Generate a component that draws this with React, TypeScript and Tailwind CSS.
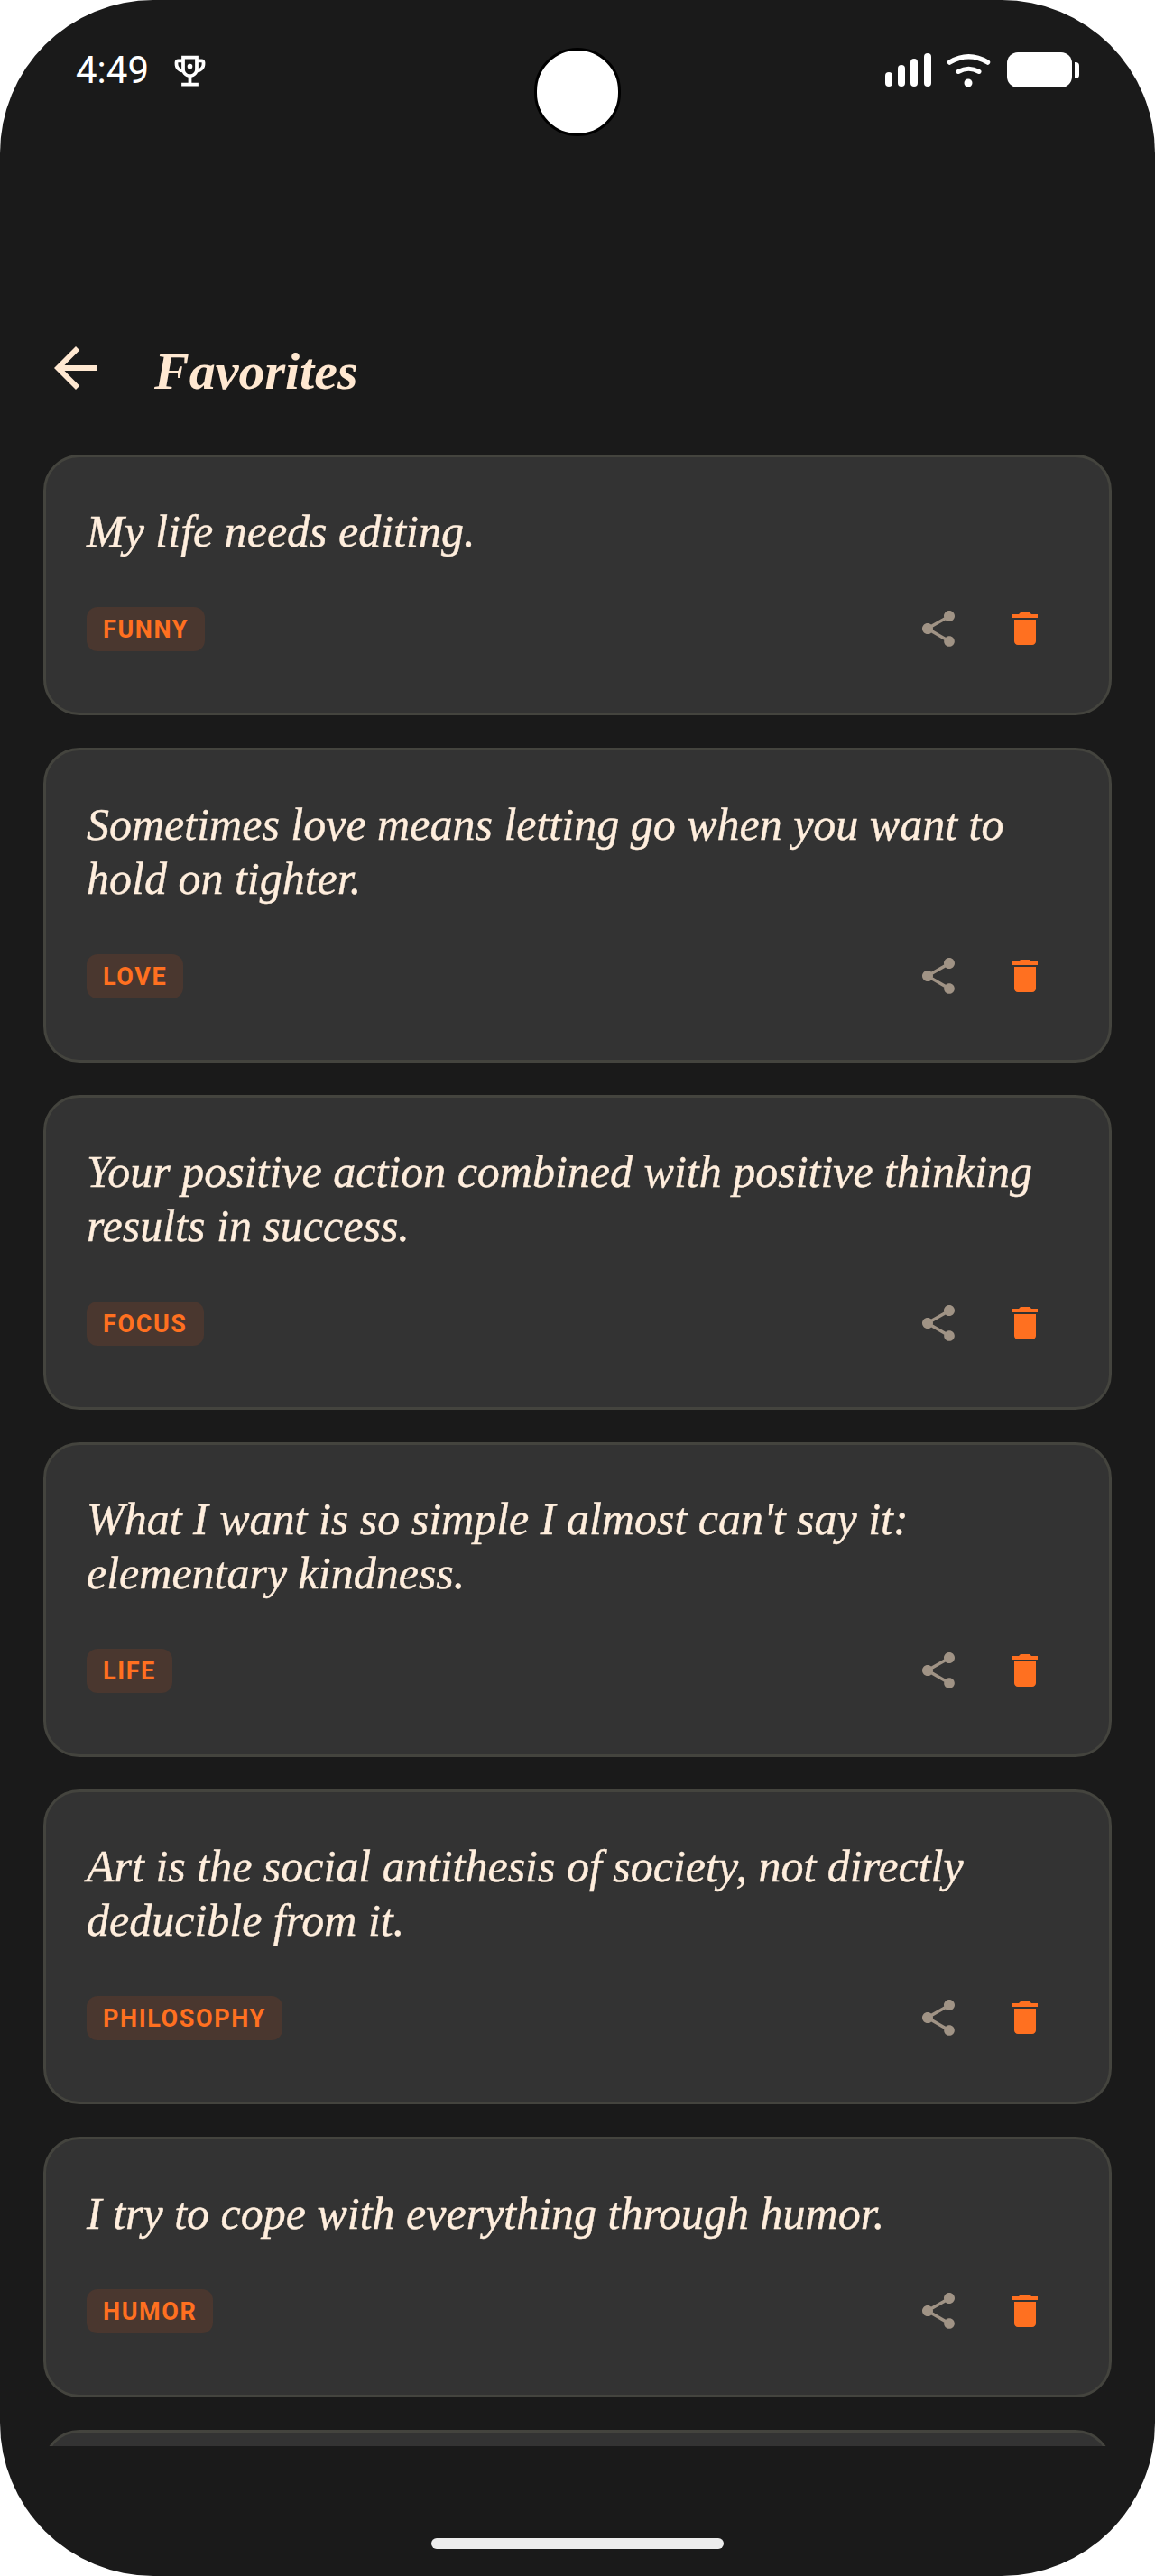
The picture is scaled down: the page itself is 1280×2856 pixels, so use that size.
const serif = "font-['Liberation_Serif',serif] italic";

const quotes: { lines: string[]; tag: string }[] = [
  { lines: ["My life needs editing."], tag: "FUNNY" },
  { lines: ["Sometimes love means letting go when you want to", "hold on tighter."], tag: "LOVE" },
  { lines: ["Your positive action combined with positive thinking", "results in success."], tag: "FOCUS" },
  { lines: ["What I want is so simple I almost can't say it:", "elementary kindness."], tag: "LIFE" },
  { lines: ["Art is the social antithesis of society, not directly", "deducible from it."], tag: "PHILOSOPHY" },
  { lines: ["I try to cope with everything through humor."], tag: "HUMOR" },
];

function Share() {
  return (
    <svg viewBox="0 0 24 24" className="w-12 h-12 fill-[#a09385]">
      <path d="M18 16.08c-.76 0-1.44.3-1.96.77L8.91 12.7c.05-.23.09-.46.09-.7s-.04-.47-.09-.7l7.05-4.11c.54.5 1.25.81 2.04.81 1.66 0 3-1.34 3-3s-1.34-3-3-3-3 1.34-3 3c0 .24.04.47.09.7L8.04 9.81C7.5 9.31 6.79 9 6 9c-1.66 0-3 1.34-3 3s1.34 3 3 3c.79 0 1.5-.31 2.04-.81l7.12 4.16c-.05.21-.08.43-.08.65 0 1.61 1.31 2.92 2.92 2.92 1.61 0 2.92-1.31 2.92-2.92s-1.31-2.92-2.92-2.92z" />
    </svg>
  );
}

function Trash() {
  return (
    <svg viewBox="0 0 24 24" className="w-12 h-12 fill-[#ff7020]">
      <path d="M6 19c0 1.1.9 2 2 2h8c1.1 0 2-.9 2-2V7H6v12zM19 4h-3.5l-1-1h-5l-1 1H5v2h14V4z" />
    </svg>
  );
}

function Card({ lines, tag }: { lines: string[]; tag: string }) {
  return (
    <div className="shrink-0 mb-9 rounded-[40px] border-[3px] border-[#44443e] bg-[#333333] px-[45px] pt-[52px] pb-[45px]">
      <div className={`${serif} text-[50px] leading-[60px] text-[#ffeedd] mb-[30px] [-webkit-text-stroke:0.4px_#ffeedd]`}>
        {lines.map((l) => (
          <div key={l} className="whitespace-nowrap">{l}</div>
        ))}
      </div>
      <div className="flex items-center justify-between h-24">
        <span className="rounded-xl bg-[#4a372f] px-[18px] pt-[2px] h-[49px] flex items-center font-['Roboto',sans-serif] font-bold text-[27px] tracking-[1.6px] text-[#ff7020]">
          {tag}
        </span>
        <div className="flex">
          <div className="w-24 h-24 flex items-center justify-center"><Share /></div>
          <div className="w-24 h-24 flex items-center justify-center"><Trash /></div>
        </div>
      </div>
    </div>
  );
}

export default function App() {
  return (
    <div className="w-[1280px] h-[2856px] bg-white">
      <div className="relative w-full h-full rounded-[170px] bg-[#1a1a1a] overflow-hidden flex flex-col">
        <div className="absolute left-[592px] top-[53px] w-24 h-[98px] rounded-full bg-white border-[3px] border-black" />
        <div className="h-[156px] shrink-0 pl-[84px] pr-[84px] pt-[56px] flex justify-between items-start">
          <div className="flex items-center h-11 gap-[23px]">
            <span className="font-['Roboto',sans-serif] text-[42px] leading-[44px] text-white">4:49</span>
            <svg viewBox="0 0 24 24" className="w-[45px] h-[45px] fill-white">
              <path d="M19 5h-2V3H7v2H5c-1.1 0-2 .9-2 2v1c0 2.55 1.92 4.63 4.39 4.94.63 1.5 1.98 2.63 3.61 2.96V19H7v2h10v-2h-4v-3.1c1.63-.33 2.98-1.46 3.61-2.96C19.08 12.63 21 10.55 21 8V7c0-1.1-.9-2-2-2zM5 8V7h2v3.82C5.84 10.4 5 9.3 5 8zm7 6c-1.65 0-3-1.35-3-3V5h6v6c0 1.65-1.35 3-3 3zm7-6c0 1.3-.84 2.4-2 2.82V7h2v1z" />
              <circle cx="12" cy="9.4" r="1.5" />
            </svg>
          </div>
          <div className="flex items-end gap-[17px] h-10">
            <svg width="51" height="37" viewBox="0 0 51 37" className="fill-white">
              <rect x="0" y="21" width="8" height="16" rx="4" />
              <rect x="14" y="13" width="8" height="24" rx="4" />
              <rect x="28" y="6" width="8" height="31" rx="4" />
              <rect x="43" y="0" width="8" height="37" rx="4" />
            </svg>
            <svg width="50" height="37" viewBox="0 0 50 37" fill="none" className="stroke-white">
              <path d="M3.5 10 Q24.5 -2.5 45.5 10" strokeWidth="5.5" strokeLinecap="round" />
              <path d="M13 20.5 Q24.5 14 36 20.5" strokeWidth="5" strokeLinecap="round" />
              <circle cx="24" cy="33" r="4.5" className="fill-white" stroke="none" />
            </svg>
            <div className="flex items-center gap-[3px] -mb-px">
              <div className="w-[72px] h-[39px] rounded-xl bg-white" />
              <div className="w-[5px] h-[18px] rounded-r-sm bg-white" />
            </div>
          </div>
        </div>
        <div className="h-[348px] shrink-0 flex items-center">
          <div className="flex items-center pl-12 h-[72px] mt-[156px]">
            <svg viewBox="0 0 24 24" className="w-[72px] h-[72px] fill-[#ffe8d1]">
              <path d="M20 11H7.83l5.59-5.59L12 4l-8 8 8 8 1.41-1.41L7.83 13H20v-2z" />
            </svg>
            <h1 className={`${serif} font-bold text-[58px] leading-none text-[#ffe8d1] ml-[51px] mt-2`}>Favorites</h1>
          </div>
        </div>
        <div className="flex-1 min-h-0 overflow-hidden px-12 flex flex-col">
          {quotes.map((q) => (
            <Card key={q.tag} lines={q.lines} tag={q.tag} />
          ))}
          <div className="shrink-0 h-[289px] rounded-[40px] border-[3px] border-[#44443e] bg-[#333333]" />
        </div>
        <div className="h-[144px] shrink-0 flex justify-center pt-[102px]">
          <div className="w-[324px] h-3 rounded-full bg-[#ececec]" />
        </div>
      </div>
    </div>
  );
}
